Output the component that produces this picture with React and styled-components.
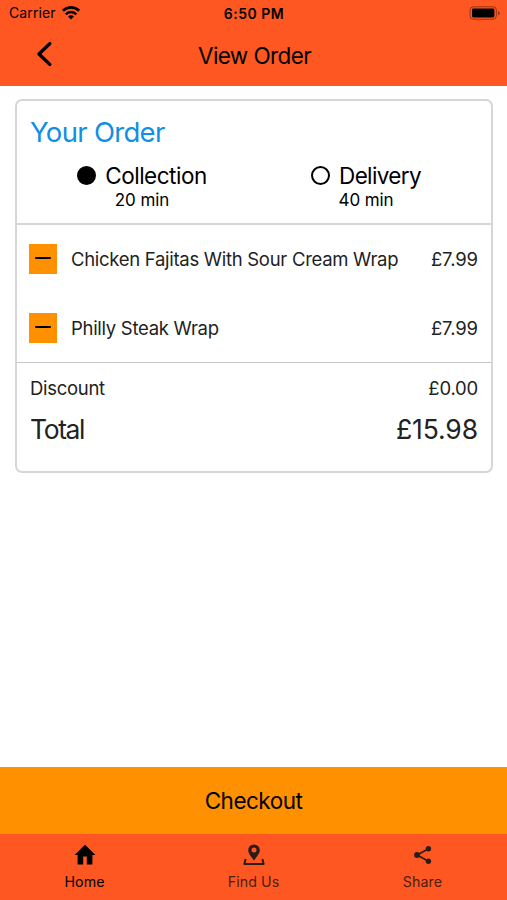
import React from "react";
import styled, { createGlobalStyle } from "styled-components";

const items = [
  { name: "Chicken Fajitas With Sour Cream Wrap", price: "£7.99" },
  { name: "Philly Steak Wrap", price: "£7.99" },
];

const App = () => {
  return (
    <>
      <GlobalStyle />
      <Screen>
        <StatusBar>
          <Carrier>
            <Text $size={14} $spacing={0.1}>Carrier</Text>
            <svg width="18" height="14" viewBox="0 0 18 14">
              <path d="M0.8 4.7a11.8 11.8 0 0 1 16.4 0" fill="none" stroke="#000" strokeWidth="2.8" />
              <path d="M3.7 8.3a7.5 7.5 0 0 1 10.6 0" fill="none" stroke="#000" strokeWidth="2.5" />
              <path d="M9 13.6L6 10.6a4.2 4.2 0 0 1 6 0z" />
            </svg>
          </Carrier>
          <Time>6:50 PM</Time>
          <Battery>
            <svg width="32" height="14" viewBox="0 0 32 14">
              <rect x="1" y="0.8" width="26.4" height="12.4" rx="3.4" fill="none" stroke="#000" strokeOpacity="0.4" />
              <rect x="3" y="2.6" width="22.4" height="8.8" rx="1.4" />
              <path d="M29 5v4.4q1.7-.6 1.7-2.2T29 5z" fillOpacity="0.4" />
            </svg>
          </Battery>
        </StatusBar>
        <Header>
          <BackButton aria-label="Back">
            <svg width="17" height="26" viewBox="0 0 17 26">
              <path d="M13.8 2.6L3 13l10.8 10.4" fill="none" stroke="#000" strokeWidth="3.4" strokeLinecap="round" strokeLinejoin="round" />
            </svg>
          </BackButton>
          <Title>View Order</Title>
        </Header>
        <Content>
          <Card>
            <OrderHeader>
              <CardTitle>Your Order</CardTitle>
              <Options>
                <Option>
                  <OptionLabel>
                    <Radio $checked />
                    <Text $size={22.5} $spacing={-0.5}>Collection</Text>
                  </OptionLabel>
                  <OptionTime>20 min</OptionTime>
                </Option>
                <Option>
                  <OptionLabel>
                    <Radio />
                    <Text $size={22.5} $spacing={-0.65}>Delivery</Text>
                  </OptionLabel>
                  <OptionTime>40 min</OptionTime>
                </Option>
              </Options>
            </OrderHeader>
            <Items>
              {items.map((item) => (
                <Item key={item.name}>
                  <RemoveButton aria-label="Remove" />
                  <ItemName>{item.name}</ItemName>
                  <ItemPrice>{item.price}</ItemPrice>
                </Item>
              ))}
            </Items>
            <Summary>
              <SummaryRow $height={30}>
                <Text $size={18.5} $spacing={-0.3}>Discount</Text>
                <Text $size={18.5} $spacing={-0.2}>£0.00</Text>
              </SummaryRow>
              <SummaryRow $height={54}>
                <Text $size={26.5} $spacing={-1.4}>Total</Text>
                <Text $size={26.5} $spacing={-0.1}>£15.98</Text>
              </SummaryRow>
            </Summary>
          </Card>
        </Content>
        <CheckoutButton>Checkout</CheckoutButton>
        <TabBar>
          <Tab $active>
            <svg width="24" height="24" viewBox="0 0 24 24">
              <path d="M12 1.8L1.6 12h3v9.4h5.6v-7.8h3.6v7.8h5.6V12h3z" />
            </svg>
            <Text $size={14.2} $spacing={0.1}>Home</Text>
          </Tab>
          <Tab>
            <svg width="24" height="24" viewBox="0 0 24 24">
              <path fillRule="evenodd" d="M12 1.4a5.8 5.8 0 0 0-5.8 5.8c0 4 4 6.8 5.8 10.6 1.8-3.8 5.8-6.6 5.8-10.6A5.8 5.8 0 0 0 12 1.4zm0 3.2a2.5 2.5 0 1 1 0 5 2.5 2.5 0 0 1 0-5z" />
              <path d="M3.6 16l-1.2 5h19.2l-1.2-5" fill="none" stroke="currentColor" strokeWidth="2" strokeLinejoin="round" />
            </svg>
            <Text $size={14.2} $spacing={0.1}>Find Us</Text>
          </Tab>
          <Tab>
            <svg width="24" height="24" viewBox="0 0 24 24">
              <path d="M17.4 5.8L6.2 12l11.2 6.2" fill="none" stroke="currentColor" strokeWidth="1.7" />
              <circle cx="17.4" cy="5.8" r="2.7" />
              <circle cx="6" cy="12" r="2.9" />
              <circle cx="17.4" cy="18.2" r="2.7" />
            </svg>
            <Text $size={14.2} $spacing={0.1}>Share</Text>
          </Tab>
        </TabBar>
      </Screen>
    </>
  );
};

const GlobalStyle = createGlobalStyle`
  * {
    box-sizing: border-box;
  }
  body {
    margin: 0;
    font-family: Inter, "Liberation Sans", sans-serif;
  }
  button {
    border: none;
    padding: 0;
    font: inherit;
    color: inherit;
    background: none;
  }
  svg {
    display: block;
    fill: currentColor;
  }
`;
const Text = styled.span`
  font-size: ${({ $size }) => $size}px;
  letter-spacing: ${({ $spacing }) => $spacing || 0}px;
  line-height: 1.2;
  white-space: nowrap;
`;
const Screen = styled.div`
  display: flex;
  flex-direction: column;
  height: 900px;
  width: 507px;
  background: #fff;
  color: #000;
`;
const StatusBar = styled.div`
  display: grid;
  grid-template-columns: 1fr auto 1fr;
  align-items: center;
  height: 27px;
  padding: 0 6px 0 9px;
  background: #ff5722;
`;
const Carrier = styled.div`
  display: flex;
  align-items: center;
  gap: 6px;
`;
const Time = styled.span`
  padding: 0 2px 1px 0;
  font-size: 14px;
  font-weight: 600;
  letter-spacing: 0.5px;
`;
const Battery = styled.div`
  justify-self: end;
  padding-bottom: 1px;
`;
const Header = styled.header`
  display: grid;
  grid-template-columns: 1fr auto 1fr;
  align-items: center;
  height: 59px;
  padding-bottom: 3px;
  background: #ff5722;
`;
const BackButton = styled.button`
  justify-self: start;
  margin: 0 0 2px 36px;
`;
const Title = styled.h1`
  margin: 0;
  padding-left: 2px;
  font-size: 22.5px;
  font-weight: 400;
  line-height: 27px;
  letter-spacing: -0.6px;
`;
const Content = styled.main`
  flex: 1;
  padding: 13px 14px 0 15px;
`;
const Card = styled.section`
  height: 374px;
  border: 2px solid #d6d6d6;
  border-radius: 7px;
`;
const OrderHeader = styled.div`
  height: 124px;
  padding: 14px 13px 0;
  border-bottom: 2px solid #d6d6d6;
`;
const CardTitle = styled.h2`
  margin: 0;
  font-size: 27.5px;
  font-weight: 400;
  line-height: 34px;
  letter-spacing: -0.7px;
  color: #128fe2;
`;
const Options = styled.div`
  display: grid;
  grid-template-columns: 1fr 1fr;
  padding-top: 13px;
`;
const Option = styled.div`
  display: flex;
  flex-direction: column;
  align-items: center;
`;
const OptionLabel = styled.div`
  display: flex;
  align-items: center;
  gap: 9px;
`;
const OptionTime = styled.span`
  padding-top: 1px;
  font-size: 17px;
  line-height: 20px;
  letter-spacing: -0.1px;
`;
const Radio = styled.span`
  height: 19px;
  width: 19px;
  margin-bottom: 1px;
  border: 2px solid #000;
  border-radius: 50%;
  background: ${({ $checked }) => ($checked ? "#000" : "#fff")};
`;
const Items = styled.div`
  margin-top: -1px;
  border-bottom: 1px solid #c4c4c4;
`;
const Item = styled.div`
  display: flex;
  align-items: center;
  height: 69px;
  padding: 0 13px 0 12px;
  font-size: 18.5px;
  line-height: 23px;
  color: #222;
`;
const RemoveButton = styled.button`
  display: grid;
  place-items: center;
  height: 30px;
  width: 28px;
  padding-bottom: 2px;
  background: #ff9100;
  &::before {
    content: "";
    height: 2px;
    width: 16px;
    border-radius: 1px;
    background: #000;
  }
`;
const ItemName = styled.span`
  flex: 1;
  padding-top: 2px;
  margin-left: 14px;
  letter-spacing: -0.29px;
  white-space: nowrap;
`;
const ItemPrice = styled.span`
  padding-top: 2px;
  letter-spacing: -0.1px;
`;
const Summary = styled.div`
  padding: 10px 13px 0;
  color: #222;
`;
const SummaryRow = styled.div`
  display: flex;
  align-items: center;
  justify-content: space-between;
  height: ${({ $height }) => $height}px;
`;
const CheckoutButton = styled.button`
  height: 67px;
  background: #ff9100;
  font-size: 22.5px;
  letter-spacing: -0.5px;
`;
const TabBar = styled.nav`
  display: grid;
  grid-template-columns: repeat(3, 1fr);
  height: 66px;
  background: #ff5722;
`;
const Tab = styled.div`
  display: flex;
  flex-direction: column;
  align-items: center;
  gap: 6px;
  padding-top: 9px;
  color: ${({ $active }) => ($active ? "#000" : "#4a1f12")};
  svg {
    color: ${({ $active }) => ($active ? "#000" : "#2b1c17")};
  }
`;

export default App;
